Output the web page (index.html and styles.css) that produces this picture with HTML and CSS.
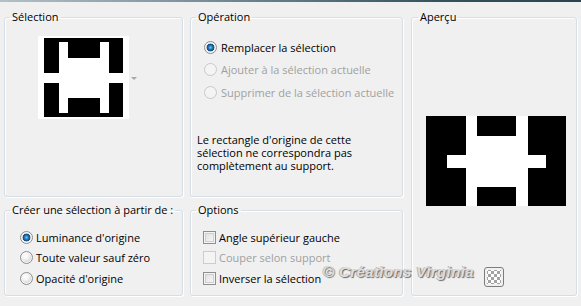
FILE: index.html
```html
<!DOCTYPE html>
<html lang="fr">
<head>
<meta charset="utf-8">
<title>Sélection</title>
<link rel="stylesheet" href="styles.css">
</head>
<body>
<div class="dialog">
  <fieldset class="group sel">
    <legend>Sélection</legend>
    <div class="thumb-row">
      <svg class="thumb" width="91" height="83" viewBox="0 0 91 83">
        <rect x="0" y="0" width="91" height="83" fill="#fff"/>
        <rect x="6" y="2" width="79" height="79" fill="#000"/>
        <rect x="21" y="6" width="9" height="71" fill="#fff"/>
        <rect x="62" y="6" width="9" height="71" fill="#fff"/>
        <rect x="21" y="22" width="50" height="40" fill="#fff"/>
        <rect x="6" y="37" width="79" height="10" fill="#fff"/>
      </svg>
      <span class="drop-arrow"></span>
    </div>
  </fieldset>

  <fieldset class="group op">
    <legend>Opération</legend>
    <div class="options op-list">
      <label class="opt"><span class="radio checked"></span>Remplacer la sélection</label>
      <label class="opt disabled"><span class="radio"></span>Ajouter à la sélection actuelle</label>
      <label class="opt disabled"><span class="radio"></span>Supprimer de la sélection actuelle</label>
    </div>
    <p class="note">Le rectangle d'origine de cette<br>sélection ne correspondra pas<br>complètement au support.</p>
  </fieldset>

  <fieldset class="group apercu">
    <legend>Aperçu</legend>
    <svg class="preview" width="140" height="90" viewBox="0 0 140 90">
      <rect x="0" y="0" width="140" height="90" fill="#000"/>
      <rect x="40" y="0" width="11" height="90" fill="#fff"/>
      <rect x="90" y="0" width="12" height="90" fill="#fff"/>
      <rect x="40" y="20" width="62" height="51" fill="#fff"/>
      <rect x="21" y="39" width="99" height="13" fill="#fff"/>
    </svg>
    <span class="checker"></span>
  </fieldset>

  <fieldset class="group creer">
    <legend>Créer une sélection à partir de :</legend>
    <div class="options src-list">
      <label class="opt"><span class="radio checked"></span>Luminance d'origine</label>
      <label class="opt"><span class="radio"></span>Toute valeur sauf zéro</label>
      <label class="opt"><span class="radio"></span>Opacité d'origine</label>
    </div>
  </fieldset>

  <fieldset class="group opts">
    <legend>Options</legend>
    <div class="options chk-list">
      <label class="opt"><span class="check"></span>Angle supérieur gauche</label>
      <label class="opt disabled"><span class="check"></span>Couper selon support</label>
      <label class="opt"><span class="check"></span>Inverser la sélection</label>
    </div>
  </fieldset>

  <div class="watermark">© Créations Virginia</div>
</div>
</body>
</html>
```

FILE: styles.css
```css
html, body {
  margin: 0;
  padding: 0;
  background: #f0f0f0;
}

body {
  font-family: "Open Sans", "Noto Sans", sans-serif;
  font-size: 11px;
  color: #000;
  width: 581px;
  height: 306px;
  overflow: hidden;
}

.dialog {
  position: relative;
  display: grid;
  grid-template-columns: 179px 213px 167px;
  grid-template-rows: 187px 93px;
  column-gap: 7px;
  row-gap: 6px;
  padding: 8px 0 0 4px;
  border-top: 2px solid #5a7482;
  border-image: linear-gradient(to right, #b4c0c8, #6f8794 40%, #35525f 75%, #2c4350) 1;
  border-left: 0;
  border-right: 0;
  border-bottom: 0;
  height: 304px;
  box-sizing: border-box;
}

.group {
  margin: 0;
  padding: 0;
  min-width: 0;
  border: 1px solid #d5dfe5;
  border-radius: 3px;
  box-shadow: inset 1px 1px 0 #fff, 1px 1px 0 #fff;
}

.group legend {
  margin-left: 5px;
  padding: 0 2px;
  line-height: 14px;
  font-size: 11px;
  color: #000;
  white-space: nowrap;
}

.sel { grid-column: 1; grid-row: 1; }
.op { grid-column: 2; grid-row: 1; }
.apercu { grid-column: 3; grid-row: 1 / span 2; margin-left: 1px; }
.creer { grid-column: 1; grid-row: 2; }
.opts { grid-column: 2; grid-row: 2; }

.apercu legend { margin-left: 6px; }

/* Sélection thumbnail */
.thumb-row {
  display: flex;
  align-items: center;
  margin: 12px 0 0 33px;
}
.thumb { display: block; }
.drop-arrow {
  width: 0;
  height: 0;
  margin-left: 2px;
  margin-top: 1px;
  border-left: 3px solid transparent;
  border-right: 3px solid transparent;
  border-top: 3px solid #a7a7a7;
}

/* option lists */
.options {
  display: flex;
  flex-direction: column;
}
.opt {
  display: flex;
  align-items: center;
  gap: 4px;
  white-space: nowrap;
}
.opt.disabled { color: #a0a0a0; }

.op-list { margin: 12px 0 0 13px; }
.op-list .opt { height: 22.5px; }

.note {
  margin: 29px 0 0 6px;
  line-height: 13px;
  font-size: 11px;
}

.src-list { margin: 10px 0 0 15px; }
.src-list .opt { height: 20.5px; gap: 3px; }

.chk-list { margin: 10px 0 0 12px; }
.chk-list .opt { height: 20.5px; gap: 3px; }

/* radio */
.radio {
  flex: none;
  width: 11px;
  height: 11px;
  border-radius: 50%;
  border: 1px solid #8e8f8f;
  background: radial-gradient(circle at 40% 35%, #ffffff 0, #f4f4f4 3px, #dcdcdc 6px);
  box-shadow: inset 0 0 0 1px #f6f6f6;
}
.radio.checked {
  background: radial-gradient(circle at 50% 50%, #7cc6f4 0, #2a86c8 1.6px, #145a92 3px, #1d4d78 3.6px, #e4e4e4 4.2px, #f6f6f6 6px);
}
.disabled .radio {
  border-color: #c9c9c9;
  background: #f4f4f4;
  box-shadow: none;
}

/* checkbox */
.check {
  flex: none;
  width: 11px;
  height: 11px;
  border: 1px solid #8e8f8f;
  background: linear-gradient(135deg, #dcdcdc, #fbfbfb);
  box-shadow: inset 0 0 0 1px #f4f4f4, inset 0 0 0 2px #cfcfcf;
}
.disabled .check {
  border-color: #cdcdcd;
  background: #f4f4f4;
  box-shadow: none;
}

/* Aperçu */
.preview {
  display: block;
  margin: 92px 0 0 14px;
}
.checker {
  display: block;
  width: 20px;
  height: 20px;
  margin: 61px 0 0 72px;
  padding: 2px;
  box-sizing: border-box;
  border: 1px solid #7d7d7d;
  border-radius: 3px;
  background-color: #fff;
  background-image: conic-gradient(#a3a3a3 25%, #fff 0 50%, #a3a3a3 0 75%, #fff 0);
  background-size: 6px 6px;
  background-position: 0 0;
  background-clip: content-box;
}

/* watermark overlay */
.watermark {
  position: absolute;
  left: 323px;
  top: 261px;
  font-family: "Liberation Sans", Arial, sans-serif;
  font-weight: bold;
  font-style: italic;
  font-size: 15px;
  color: #dedede;
  letter-spacing: 0.4px;
  text-shadow: 1px 1px 1px #6a6a6a, -1px 0 0 #b8b8b8;
  white-space: nowrap;
}
```
